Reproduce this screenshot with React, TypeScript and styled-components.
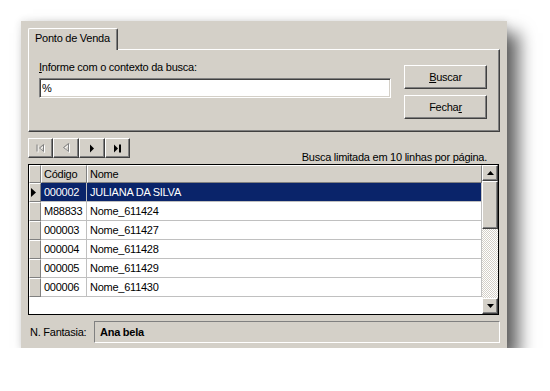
import React from "react";
import styled, { createGlobalStyle } from "styled-components";

const GlobalStyle = createGlobalStyle`
  html, body {
    margin: 0;
    padding: 0;
    background: #fff;
  }
  body {
    font-family: "Liberation Sans", Arial, sans-serif;
    font-size: 11px;
    letter-spacing: -0.25px;
    color: #000;
  }
`;

const Window = styled.div`
  box-sizing: border-box;
  width: 486px;
  height: 327px;
  margin: 21px 0 0 21px;
  padding: 7px 7px 5px 7px;
  background: #d4d0c8;
  display: flex;
  flex-direction: column;
  box-shadow: 12px 12px 16px rgba(0, 0, 0, 0.6), 0 0 8px rgba(0, 0, 0, 0.12);
`;

const TabStrip = styled.div`
  display: flex;
  height: 21px;
`;

const Tab = styled.div`
  position: relative;
  z-index: 1;
  box-sizing: border-box;
  width: 90px;
  height: 22px;
  padding: 3px 0 0 6px;
  line-height: 13px;
  background: #d4d0c8;
  border-top: 1px solid #fff;
  border-left: 1px solid #fff;
  border-right: 1px solid #404040;
  border-radius: 2px 2px 0 0;
  box-shadow: inset -1px 0 #808080;
`;

const TabPage = styled.div`
  box-sizing: border-box;
  height: 83px;
  display: flex;
  padding: 11px 12px 0 10px;
  border: 1px solid;
  border-color: #fff #404040 #404040 #fff;
  box-shadow: inset -1px -1px #808080;
`;

const SearchColumn = styled.div`
  display: flex;
  flex-direction: column;
`;

const Label = styled.label`
  line-height: 13px;
`;

const TextBox = styled.input`
  box-sizing: border-box;
  width: 352px;
  height: 20px;
  margin: 4px 0 0;
  padding: 0 0 0 2px;
  font: inherit;
  letter-spacing: inherit;
  color: #000;
  background: #fff;
  border: 1px solid;
  border-color: #808080 #fff #fff #808080;
  box-shadow: inset 1px 1px #404040, inset -1px -1px #d4d0c8;
  outline: none;
`;

const ButtonColumn = styled.div`
  margin: 4px 0 0 auto;
  display: flex;
  flex-direction: column;
  gap: 6px;
`;

const Button = styled.button`
  box-sizing: border-box;
  width: 83px;
  height: 24px;
  padding: 0;
  font: inherit;
  letter-spacing: inherit;
  color: #000;
  background: #d4d0c8;
  border: 1px solid;
  border-color: #fff #404040 #404040 #fff;
  box-shadow: inset -1px -1px #808080;
`;

const NavRow = styled.div`
  display: flex;
  height: 26px;
  margin-top: 6px;
`;

const Navigator = styled.div`
  display: flex;
  height: 20px;
`;

const NavButton = styled.div<{ $w: number }>`
  box-sizing: border-box;
  width: ${(p) => p.$w}px;
  height: 20px;
  display: flex;
  align-items: center;
  justify-content: center;
  background: #d4d0c8;
  border: 1px solid;
  border-color: #fff #404040 #404040 #fff;
  box-shadow: inset -1px -1px #808080;
`;

const Info = styled.div`
  align-self: flex-end;
  margin: 0 13px 0 auto;
  line-height: 13px;
`;

const Grid = styled.div`
  box-sizing: border-box;
  width: 471px;
  height: 151px;
  display: flex;
  background: #fff;
  border: 1px solid #000;
`;

const Table = styled.div`
  flex: 1;
  display: flex;
  flex-direction: column;
`;

const Row = styled.div`
  display: flex;
  height: 19px;
`;

const HeaderRow = styled.div`
  display: flex;
  height: 18px;
`;

const Raised = styled.div<{ $w?: number }>`
  box-sizing: border-box;
  ${(p) => (p.$w ? `width: ${p.$w}px;` : "flex: 1;")}
  height: 100%;
  padding: 1px 0 0 2px;
  line-height: 15px;
  background: #d4d0c8;
  border: 1px solid;
  border-color: #fff #808080 #808080 #fff;
  display: flex;
  align-items: center;
`;

const Cell = styled.div<{ $w?: number; $sel?: boolean }>`
  box-sizing: border-box;
  ${(p) => (p.$w ? `width: ${p.$w}px;` : "flex: 1;")}
  height: 19px;
  padding: 1px 0 0 3px;
  line-height: 17px;
  white-space: nowrap;
  overflow: hidden;
  color: ${(p) => (p.$sel ? "#fff" : "#000")};
  background: ${(p) => (p.$sel ? "#0a246a" : "#fff")};
  border-right: 1px solid #c0c0c0;
  border-bottom: 1px solid #c0c0c0;
`;

const Indicator = styled.div`
  box-sizing: border-box;
  width: 12px;
  height: 19px;
  display: flex;
  align-items: center;
  padding-left: 1px;
  background: #d4d0c8;
  border: 1px solid;
  border-color: #fff #808080 #808080 #fff;
`;

const ScrollBar = styled.div`
  width: 16px;
  display: flex;
  flex-direction: column;
`;

const ScrollButton = styled.div<{ $h: number }>`
  box-sizing: border-box;
  height: ${(p) => p.$h}px;
  display: flex;
  align-items: center;
  justify-content: center;
  background: #d4d0c8;
  border: 1px solid;
  border-color: #fff #404040 #404040 #fff;
  box-shadow: inset -1px -1px #808080;
`;

const Track = styled.div`
  flex: 1;
  background: repeating-conic-gradient(#d4d0c8 0 25%, #fff 0 50%) 0 0 / 2px 2px;
`;

const Footer = styled.div`
  display: flex;
  align-items: center;
  height: 22px;
  margin-top: 6px;
`;

const FooterLabel = styled.span`
  margin-left: 2px;
`;

const Field = styled.div`
  box-sizing: border-box;
  width: 406px;
  height: 22px;
  margin-left: auto;
  padding-left: 5px;
  line-height: 20px;
  font-weight: bold;
  border: 1px solid;
  border-color: #808080 #fff #fff #808080;
`;

const rows = [
  ["000002", "JULIANA DA SILVA"],
  ["M88833", "Nome_611424"],
  ["000003", "Nome_611427"],
  ["000004", "Nome_611428"],
  ["000005", "Nome_611429"],
  ["000006", "Nome_611430"],
];

function FirstIcon() {
  return (
    <svg width="10" height="9" viewBox="0 0 10 9">
      <g fill="none" stroke="#fff">
        <path d="M2 1.5v7M8.5 1.5l-4 3.5 4 3.5z" />
      </g>
      <g fill="none" stroke="#808080">
        <path d="M1 0.5v7M7.5 0.5l-4 3.5 4 3.5z" />
      </g>
    </svg>
  );
}

function PriorIcon() {
  return (
    <svg width="9" height="10" viewBox="0 0 9 10">
      <path d="M7.5 1.5l-5 4 5 4z" fill="none" stroke="#fff" />
      <path d="M6.5 0.5l-5 4 5 4z" fill="none" stroke="#808080" />
    </svg>
  );
}

function NextIcon() {
  return (
    <svg width="6" height="9" viewBox="0 0 6 9">
      <path d="M1 0.5l4 4-4 4z" fill="#000" />
    </svg>
  );
}

function LastIcon() {
  return (
    <svg width="8" height="9" viewBox="0 0 8 9">
      <path d="M0 0.5l4 4-4 4z" fill="#000" />
      <rect x="5" y="0.5" width="2" height="8" fill="#000" />
    </svg>
  );
}

function Arrow({ down }: { down?: boolean }) {
  return (
    <svg width="7" height="4" viewBox="0 0 7 4">
      <path d={down ? "M0 0h7L3.5 4z" : "M3.5 0L7 4H0z"} fill="#000" />
    </svg>
  );
}

function RowMarker() {
  return (
    <svg width="5" height="9" viewBox="0 0 5 9">
      <path d="M0 0l5 4.5L0 9z" fill="#000" />
    </svg>
  );
}

export default function App() {
  return (
    <React.Fragment>
      <GlobalStyle />
      <Window>
        <TabStrip>
          <Tab>Ponto de Venda</Tab>
        </TabStrip>
        <TabPage>
          <SearchColumn>
            <Label>
              <u>I</u>nforme com o contexto da busca:
            </Label>
            <TextBox defaultValue="%" />
          </SearchColumn>
          <ButtonColumn>
            <Button>
              <u>B</u>uscar
            </Button>
            <Button>
              Fecha<u>r</u>
            </Button>
          </ButtonColumn>
        </TabPage>
        <NavRow>
          <Navigator>
            <NavButton $w={25}>
              <FirstIcon />
            </NavButton>
            <NavButton $w={26}>
              <PriorIcon />
            </NavButton>
            <NavButton $w={26}>
              <NextIcon />
            </NavButton>
            <NavButton $w={25}>
              <LastIcon />
            </NavButton>
          </Navigator>
          <Info>Busca limitada em 10 linhas por página.</Info>
        </NavRow>
        <Grid>
          <Table>
            <HeaderRow>
              <Raised $w={12} />
              <Raised $w={46}>Código</Raised>
              <Raised>Nome</Raised>
            </HeaderRow>
            {rows.map(([code, name], i) => (
              <Row key={code}>
                <Indicator>{i === 0 && <RowMarker />}</Indicator>
                <Cell $w={46} $sel={i === 0}>
                  {code}
                </Cell>
                <Cell $sel={i === 0}>{name}</Cell>
              </Row>
            ))}
          </Table>
          <ScrollBar>
            <ScrollButton $h={16}>
              <Arrow />
            </ScrollButton>
            <ScrollButton $h={48} />
            <Track />
            <ScrollButton $h={16}>
              <Arrow down />
            </ScrollButton>
          </ScrollBar>
        </Grid>
        <Footer>
          <FooterLabel>N. Fantasia:</FooterLabel>
          <Field>Ana bela</Field>
        </Footer>
      </Window>
    </React.Fragment>
  );
}
